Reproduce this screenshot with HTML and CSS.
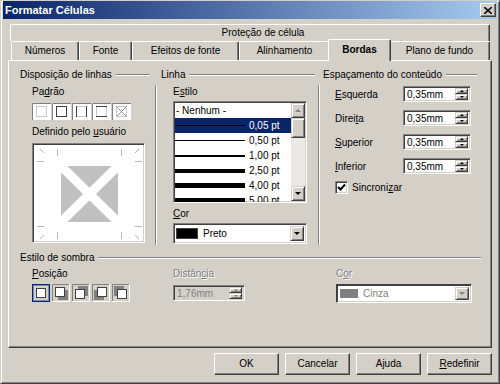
FILE: index.html
```html
<!DOCTYPE html>
<html>
  <head>
    <title>Formatar Células</title>
    <link rel="stylesheet" href="styles.css">
  </head>
  <body>
    <div class="window">
      <div class="titlebar">
        <span class="title">Formatar Células</span>
        <span class="close">
          <svg width="8" height="7" viewBox="0 0 8 7"><path d="M0 0L8 7M8 0L0 7" stroke="#000" stroke-width="1.6"/></svg>
        </span>
      </div>

      <div class="tabs">
        <div class="tab-row back">
          <div class="tab wide">Proteção de célula</div>
        </div>
        <div class="tab-row front">
          <div class="tab t-num">Números</div>
          <div class="tab t-fon">Fonte</div>
          <div class="tab t-efe">Efeitos de fonte</div>
          <div class="tab t-ali">Alinhamento</div>
          <div class="tab t-bor active">Bordas</div>
          <div class="tab t-pla">Plano de fundo</div>
        </div>
      </div>

      <div class="panel">
        <div class="top">
          <!-- line arrangement -->
          <div class="group g-lines">
            <div class="legend"><span>Disposição de linhas</span><i></i></div>
            <div class="group-body">
              <div class="label">Pa<u>d</u>rão</div>
              <div class="presets">
                <svg class="preset" width="19" height="17"><rect width="19" height="17" fill="#fff"/><path d="M0.5 17V0.5H19" stroke="#808080" fill="none"/><rect x="4.5" y="3.5" width="10" height="10" fill="none" stroke="#c8c8c8"/></svg>
                <svg class="preset" width="19" height="17"><rect width="19" height="17" fill="#fff"/><path d="M0.5 17V0.5H19" stroke="#808080" fill="none"/><rect x="4.5" y="3.5" width="10" height="10" fill="none" stroke="#404040"/></svg>
                <svg class="preset" width="19" height="17"><rect width="19" height="17" fill="#fff"/><path d="M0.5 17V0.5H19" stroke="#808080" fill="none"/><rect x="4.5" y="3.5" width="10" height="10" fill="none" stroke="#c8c8c8"/><path d="M4.5 3V14M14.5 3V14" stroke="#404040"/></svg>
                <svg class="preset" width="19" height="17"><rect width="19" height="17" fill="#fff"/><path d="M0.5 17V0.5H19" stroke="#808080" fill="none"/><rect x="4.5" y="3.5" width="10" height="10" fill="none" stroke="#c8c8c8"/><path d="M4 3.5H15M4 13.5H15" stroke="#404040"/></svg>
                <svg class="preset" width="19" height="17"><rect width="19" height="17" fill="#fff"/><path d="M0.5 17V0.5H19" stroke="#808080" fill="none"/><rect x="4.5" y="3.5" width="10" height="10" fill="none" stroke="#c8c8c8"/><path d="M4.5 3.5L14.5 13.5M14.5 3.5L4.5 13.5" stroke="#909090"/></svg>
              </div>
              <div class="label spaced">Definido pelo <u>u</u>suário</div>
              <div class="preview">
                <svg width="109" height="96" viewBox="0 0 109 96">
                  <rect x="26" y="20" width="57" height="56" fill="#c0c0c0"/>
                  <path d="M26 20L83 76M83 20L26 76" stroke="#fff" stroke-width="9"/>
                  <g stroke="#b8b8b8" fill="none">
                    <path d="M22.5 3V10M2 15.5H9M5 3L9 7"/>
                    <path d="M86.5 3V10M107 15.5H100M104 3L100 7"/>
                    <path d="M22.5 93V86M2 80.5H9M5 93L9 89"/>
                    <path d="M86.5 93V86M107 80.5H100M104 93L100 89"/>
                  </g>
                </svg>
              </div>
            </div>
          </div>

          <!-- line style -->
          <div class="group g-line">
            <div class="legend"><span>Linha</span><i></i></div>
            <div class="group-body">
              <div class="label">E<u>s</u>tilo</div>
              <div class="listbox">
                <div class="items">
                  <div class="item none">- Nenhum -</div>
                  <div class="item selected"><b style="height:1px"></b><span>0,05 pt</span></div>
                  <div class="item"><b style="height:1px"></b><span>0,50 pt</span></div>
                  <div class="item"><b style="height:2px"></b><span>1,00 pt</span></div>
                  <div class="item"><b style="height:4px"></b><span>2,50 pt</span></div>
                  <div class="item"><b style="height:5px"></b><span>4,00 pt</span></div>
                  <div class="item"><b style="height:6px"></b><span>5,00 pt</span></div>
                </div>
                <div class="scrollbar">
                  <div class="sbtn"><span class="arrow up dim"></span></div>
                  <div class="thumb"></div>
                  <div class="track"></div>
                  <div class="sbtn"><span class="arrow down"></span></div>
                </div>
              </div>
              <div class="label cor-label"><u>C</u>or</div>
              <div class="combo">
                <span class="swatch black"></span>
                <span class="combo-text">Preto</span>
                <span class="combo-btn"><span class="arrow down"></span></span>
              </div>
            </div>
          </div>

          <!-- content spacing -->
          <div class="group g-space">
            <div class="legend"><span>Espaçamento do conteúdo</span><i></i></div>
            <div class="group-body">
              <div class="spin-row"><span class="spin-label"><u>E</u>squerda</span><div class="spin"><span>0,35mm</span><div class="spin-btns"><div class="sbtn"><span class="arrow up small"></span></div><div class="sbtn"><span class="arrow down small"></span></div></div></div></div>
              <div class="spin-row"><span class="spin-label">Direi<u>t</u>a</span><div class="spin"><span>0,35mm</span><div class="spin-btns"><div class="sbtn"><span class="arrow up small"></span></div><div class="sbtn"><span class="arrow down small"></span></div></div></div></div>
              <div class="spin-row"><span class="spin-label"><u>S</u>uperior</span><div class="spin"><span>0,35mm</span><div class="spin-btns"><div class="sbtn"><span class="arrow up small"></span></div><div class="sbtn"><span class="arrow down small"></span></div></div></div></div>
              <div class="spin-row"><span class="spin-label"><u>I</u>nferior</span><div class="spin"><span>0,35mm</span><div class="spin-btns"><div class="sbtn"><span class="arrow up small"></span></div><div class="sbtn"><span class="arrow down small"></span></div></div></div></div>
              <div class="check-row">
                <span class="checkbox">
                  <svg width="9" height="9" viewBox="0 0 9 9"><path d="M1 4L3.5 6.5L8 1.5" stroke="#000" stroke-width="2" fill="none"/></svg>
                </span>
                <span>Sincroni<u>z</u>ar</span>
              </div>
            </div>
          </div>
        </div>

        <!-- shadow style -->
        <div class="shadow">
          <div class="legend"><span>Estilo de sombra</span><i></i></div>
          <div class="shadow-body">
            <div class="s-col s-pos">
              <div class="label"><u>P</u>osição</div>
              <div class="positions">
                <svg width="18" height="18"><rect x="0.5" y="0.5" width="17" height="17" fill="#d4d0c8" stroke="#0a246a"/><rect x="1.5" y="1.5" width="15" height="15" fill="none" stroke="#7d8cb5"/><rect x="4.5" y="4.5" width="9" height="9" fill="#fff" stroke="#404040"/></svg>
                <svg width="18" height="18"><path d="M0.5 18V0.5H18" stroke="#808080" fill="none"/><path d="M17.5 0V17.5H0" stroke="#fff" fill="none"/><rect x="6" y="6" width="10" height="10" fill="#808080"/><rect x="3.5" y="3.5" width="9" height="9" fill="#fff" stroke="#404040"/></svg>
                <svg width="18" height="18"><path d="M0.5 18V0.5H18" stroke="#808080" fill="none"/><path d="M17.5 0V17.5H0" stroke="#fff" fill="none"/><rect x="6" y="2" width="10" height="10" fill="#808080"/><rect x="3.5" y="5.5" width="9" height="9" fill="#fff" stroke="#404040"/></svg>
                <svg width="18" height="18"><path d="M0.5 18V0.5H18" stroke="#808080" fill="none"/><path d="M17.5 0V17.5H0" stroke="#fff" fill="none"/><rect x="2" y="6" width="10" height="10" fill="#808080"/><rect x="5.5" y="3.5" width="9" height="9" fill="#fff" stroke="#404040"/></svg>
                <svg width="18" height="18"><path d="M0.5 18V0.5H18" stroke="#808080" fill="none"/><path d="M17.5 0V17.5H0" stroke="#fff" fill="none"/><rect x="2" y="2" width="10" height="10" fill="#808080"/><rect x="5.5" y="5.5" width="9" height="9" fill="#fff" stroke="#404040"/></svg>
              </div>
            </div>
            <div class="s-col s-dist">
              <div class="label disabled">Distân<u>c</u>ia</div>
              <div class="spin off"><span>1,76mm</span><div class="spin-btns"><div class="sbtn"><span class="arrow up small dim"></span></div><div class="sbtn"><span class="arrow down small dim"></span></div></div></div>
            </div>
            <div class="s-col s-cor">
              <div class="label disabled">C<u>o</u>r</div>
              <div class="combo off">
                <span class="swatch gray"></span>
                <span class="combo-text">Cinza</span>
                <span class="combo-btn"><span class="arrow down dim"></span></span>
              </div>
            </div>
          </div>
        </div>
      </div>

      <div class="buttons">
        <div class="button">OK</div>
        <div class="button">Cancelar</div>
        <div class="button">A<u>j</u>uda</div>
        <div class="button"><u>R</u>edefinir</div>
      </div>
    </div>
  </body>
</html>
```

FILE: styles.css
```css
* {
  box-sizing: border-box;
}

body {
  margin: 0;
  font-family: "Liberation Sans", Arial, sans-serif;
  font-size: 10px;
  color: #000;
}

u {
  text-decoration: underline;
  text-underline-offset: 1px;
}

.window {
  width: 500px;
  height: 384px;
  display: flex;
  flex-direction: column;
  padding: 0 2px;
  background-color: #d4d0c8;
  border: 1px solid;
  border-color: #d4d0c8 #404040 #404040 #d4d0c8;
  box-shadow: inset 1px 1px #fff, inset -1px -1px #808080;
}

/* title bar */

.titlebar {
  height: 18px;
  display: flex;
  align-items: center;
  justify-content: space-between;
  padding: 0 1px 0 2px;
  background: linear-gradient(to right, #0a246a, #a6caf0);
}

.title {
  color: #fff;
  font-size: 11px;
  font-weight: bold;
}

.close {
  width: 16px;
  height: 14px;
  display: flex;
  align-items: center;
  justify-content: center;
  background-color: #d4d0c8;
  border: 1px solid;
  border-color: #fff #404040 #404040 #fff;
  box-shadow: inset -1px -1px #808080;
}

/* tabs */

.tabs {
  margin: 5px 5px 0;
}

.tab-row {
  display: flex;
}

.tab-row.back {
  height: 17px;
  margin: 0 2px;
}

.tab-row.front {
  height: 19px;
  margin: 0 2px 0 3px;
}

.tab {
  text-align: center;
  white-space: nowrap;
  background-color: #d4d0c8;
  border-top: 1px solid #fff;
  border-left: 1px solid #fff;
  border-right: 1px solid #404040;
  box-shadow: inset -1px 0 #808080;
  border-radius: 2px 2px 0 0;
}

.tab.wide {
  flex: 1;
  line-height: 15px;
  padding-left: 26px;
}

.front .tab {
  line-height: 17px;
}

.t-num { width: 68px; }
.t-fon { width: 53px; }
.t-efe { width: 107px; }
.t-ali { width: 91px; }
.t-bor { width: 59px; }
.t-pla { width: 101px; }

.tab.active {
  position: relative;
  z-index: 1;
  width: 63px;
  height: 22px;
  margin: -2px -2px -1px;
  line-height: 19px;
  font-weight: bold;
}

/* tab page */

.panel {
  height: 288px;
  margin: 0 5px;
  padding: 7px 10px 0 11px;
  border: 1px solid;
  border-color: #fff #404040 #404040 #fff;
  box-shadow: inset -1px -1px #808080;
}

.top {
  display: flex;
  height: 177px;
}

.group {
  display: flex;
  flex-direction: column;
}

.g-lines { width: 141px; }
.g-line { width: 162px; }
.g-space { width: 154px; }

.legend {
  height: 14px;
  line-height: 14px;
  display: flex;
  align-items: center;
  white-space: nowrap;
}

.legend i {
  flex: 1;
  height: 2px;
  margin-left: 4px;
  border-top: 1px solid #808080;
  border-bottom: 1px solid #fff;
}

.g-lines .legend { padding-right: 11px; }
.g-line .legend { padding-right: 8px; }

.group-body {
  flex: 1;
  margin-top: 3px;
  padding-left: 12px;
}

.g-lines .group-body,
.g-line .group-body {
  border-right: 1px solid #808080;
  box-shadow: 1px 0 #fff;
}

.g-lines .group-body { margin-right: 5px; }
.g-line .group-body { margin-right: 4px; }

.label {
  height: 14px;
  line-height: 14px;
  white-space: nowrap;
}

.label.spaced { margin-top: 5px; }

.label.disabled {
  color: #808080;
  text-shadow: 1px 1px #fff;
}

.presets {
  display: flex;
  gap: 1px;
  margin-top: 4px;
}

.preview {
  width: 113px;
  height: 100px;
  margin-top: 4px;
  background-color: #fff;
  border: 1px solid;
  border-color: #808080 #fff #fff #808080;
  box-shadow: inset 1px 1px #404040, inset -1px -1px #d4d0c8;
  padding: 2px 0 0 2px;
}

.preview svg {
  display: block;
}

/* sunken fields */

.listbox,
.combo,
.spin,
.checkbox {
  background-color: #fff;
  border: 1px solid;
  border-color: #808080 #fff #fff #808080;
  box-shadow: inset 1px 1px #404040, inset -1px -1px #d4d0c8;
}

.listbox {
  width: 134px;
  height: 102px;
  margin-top: 2px;
  padding: 1px;
  display: flex;
  overflow: hidden;
}

.items {
  width: 116px;
}

.item {
  height: 15px;
  display: flex;
  align-items: center;
  white-space: nowrap;
}

.item.none {
  padding-left: 1px;
}

.item b {
  width: 70px;
  margin-right: 4px;
  background-color: #000;
}

.item.selected {
  background-color: #0a246a;
  color: #fff;
}

.scrollbar {
  width: 14px;
  display: flex;
  flex-direction: column;
}

.sbtn,
.thumb,
.combo-btn,
.button {
  background-color: #d4d0c8;
  border: 1px solid;
  border-color: #d4d0c8 #404040 #404040 #d4d0c8;
  box-shadow: inset 1px 1px #fff, inset -1px -1px #808080;
}

.scrollbar .sbtn {
  height: 15px;
  display: flex;
  align-items: center;
  justify-content: center;
}

.thumb {
  height: 20px;
}

.track {
  flex: 1;
  background-color: #ebe9e5;
}

.arrow {
  width: 0;
  height: 0;
  border-left: 3px solid transparent;
  border-right: 3px solid transparent;
}

.arrow.up { border-bottom: 3px solid #000; }
.arrow.down { border-top: 3px solid #000; }
.arrow.up.dim { border-bottom-color: #808080; }
.arrow.down.dim { border-top-color: #808080; }

.arrow.small {
  border-left-width: 2px;
  border-right-width: 2px;
}

.arrow.small.up { border-bottom-width: 2px; }
.arrow.small.down { border-top-width: 2px; }

.cor-label {
  margin-top: 4px;
}

.combo {
  width: 134px;
  height: 21px;
  margin-top: 2px;
  padding: 2px;
  display: flex;
  align-items: center;
}

.swatch {
  width: 22px;
  height: 11px;
  border: 1px solid #404040;
}

.swatch.black { background-color: #000; }
.swatch.gray { background-color: #808080; border-color: #808080; }

.combo-text {
  flex: 1;
  margin-left: 5px;
}

.combo-btn {
  width: 14px;
  height: 100%;
  display: flex;
  align-items: center;
  justify-content: center;
}

.combo.off .combo-text {
  color: #808080;
}

/* spin fields */

.spin-row {
  height: 16px;
  display: flex;
  align-items: center;
  margin-top: 8px;
}

.spin-row:first-child {
  margin-top: 1px;
}

.spin-label {
  width: 68px;
}

.spin {
  width: 68px;
  height: 16px;
  padding: 2px 2px 2px 3px;
  display: flex;
  align-items: center;
  justify-content: space-between;
}

.spin-btns {
  width: 13px;
  height: 12px;
  display: flex;
  flex-direction: column;
}

.spin-btns .sbtn {
  height: 6px;
  display: flex;
  align-items: center;
  justify-content: center;
}

.spin.off {
  width: 72px;
  margin-top: 4px;
  background-color: #d4d0c8;
  color: #808080;
}

.check-row {
  display: flex;
  align-items: center;
  margin-top: 7px;
}

.checkbox {
  width: 13px;
  height: 13px;
  display: flex;
  align-items: center;
  justify-content: center;
  margin-right: 4px;
}

/* shadow group */

.shadow {
  margin-top: 6px;
}

.shadow-body {
  display: flex;
  padding-left: 12px;
  margin-top: 2px;
}

.s-pos { width: 141px; }
.s-dist { width: 163px; }
.s-cor { width: 136px; }

.positions {
  display: flex;
  gap: 2px;
  margin-top: 3px;
}

.positions svg {
  display: block;
}

.s-cor .combo {
  width: 136px;
  height: 19px;
  margin-top: 3px;
  border-color: #404040 #fff #fff #404040;
}

.s-cor .swatch {
  width: 18px;
  height: 9px;
  margin-left: 1px;
}

/* dialog buttons */

.buttons {
  display: flex;
  justify-content: flex-end;
  gap: 6px;
  margin-top: 5px;
  padding-right: 5px;
}

.button {
  width: 65px;
  height: 22px;
  line-height: 20px;
  text-align: center;
  border-color: #fff #404040 #404040 #fff;
  box-shadow: inset -1px -1px #808080;
}
```
